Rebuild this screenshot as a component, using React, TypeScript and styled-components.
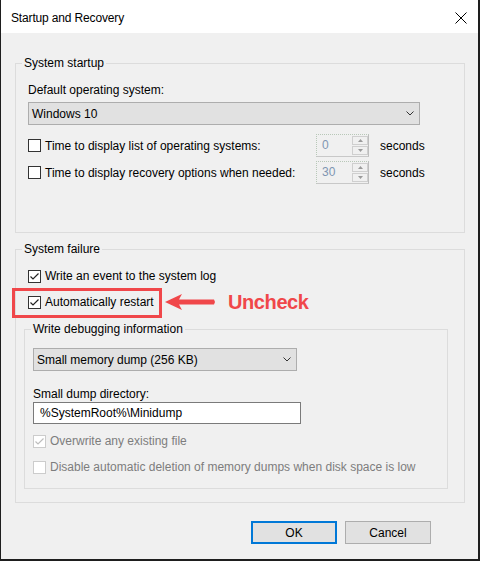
import React from 'react';
import styled, { createGlobalStyle } from 'styled-components';

const Global = createGlobalStyle`
  html, body { margin: 0; padding: 0; background: #f0f0f0; }
  body { font-family: "Liberation Sans", Arial, sans-serif; }
  * { box-sizing: border-box; }
`;

const Window = styled.div`
  width: 480px;
  height: 561px;
  border-left: 1px solid #1e1e1e;
  border-right: 2px solid #1e1e1e;
  border-bottom: 2px solid #1e1e1e;
  background: #f0f0f0;
  display: flex;
  flex-direction: column;
  font-family: "Liberation Sans", Arial, sans-serif;
  font-size: 12px;
  color: #000;
  overflow: hidden;
`;

const TitleBar = styled.div`
  height: 33px;
  flex: none;
  background: #fff;
  display: flex;
  align-items: center;
  justify-content: space-between;
  padding: 2px 11px 0 10px;
`;

const Title = styled.span`
  font-size: 12px;
  line-height: 16px;
  letter-spacing: -0.15px;
`;

const Body = styled.div`
  display: flex;
  flex-direction: column;
  padding: 22px 13px 0 14px;
`;

const Group = styled.fieldset<{ $nested?: boolean; $mt?: number }>`
  margin: ${(p) => (p.$nested ? '11px 0 0 -4px' : `${p.$mt ?? 0}px 0 0 0`)};
  align-self: stretch;
  min-width: 0;
  padding: 0;
  border: 1px solid #dcdcdc;
`;

const Legend = styled.legend`
  margin-left: 6px;
  padding: 0 2px;
  font-size: 12px;
  line-height: 16px;
`;

const GroupBody = styled.div<{ $pad: string }>`
  display: flex;
  flex-direction: column;
  align-items: flex-start;
  padding: ${(p) => p.$pad};
`;

const Label = styled.div<{ $mt?: number }>`
  line-height: 16px;
  margin-top: ${(p) => p.$mt ?? 0}px;
`;

const Select = styled.div<{ $w: number; $mt?: number }>`
  width: ${(p) => p.$w}px;
  height: 23px;
  margin-top: ${(p) => p.$mt ?? 0}px;
  background: #e1e1e1;
  border: 1px solid #adadad;
  display: flex;
  align-items: center;
  justify-content: space-between;
  padding: 0 5px 0 3px;
  line-height: 16px;
`;

const TextBox = styled.div`
  width: 268px;
  height: 22px;
  background: #fff;
  border: 1px solid #7a7a7a;
  display: flex;
  align-items: center;
  padding-left: 6px;
`;

const SpinRow = styled.div<{ $mt: number }>`
  display: grid;
  grid-template-columns: 288px 53px auto;
  align-items: center;
  height: 23px;
  margin-top: ${(p) => p.$mt}px;
`;

const CheckRow = styled.label<{ $mt?: number; $disabled?: boolean }>`
  position: relative;
  display: flex;
  align-items: center;
  gap: 4px;
  height: 16px;
  line-height: 16px;
  margin-top: ${(p) => p.$mt ?? 0}px;
  color: ${(p) => (p.$disabled ? '#7d7d7d' : '#000')};
  white-space: nowrap;
`;

const Box = styled.span<{ $disabled?: boolean }>`
  width: 13px;
  height: 13px;
  flex: none;
  display: flex;
  background: #fff;
  border: 1px solid ${(p) => (p.$disabled ? '#cccccc' : '#333333')};
`;

const Spinner = styled.div`
  height: 23px;
  display: flex;
  border: 1px dotted #b8c8b8;
  border-right: 1px solid #bdbdbd;
  border-bottom: 1px solid #c8c8c8;
`;

const SpinValue = styled.span`
  flex: 1;
  padding-left: 5px;
  line-height: 20px;
  color: #7f96b2;
`;

const SpinButtons = styled.div`
  width: 16px;
  display: flex;
  flex-direction: column;
  gap: 1px;
  padding: 1px 0;
`;

const SpinButton = styled.span`
  flex: 1;
  border: 1px solid #cfcfcf;
  display: flex;
  align-items: center;
  justify-content: center;
`;

const Seconds = styled.span`
  padding-left: 11px;
  line-height: 16px;
`;

const Highlight = styled.span`
  position: absolute;
  left: -16px;
  top: -6px;
  width: 150px;
  height: 30px;
  border: 3px solid #f0474a;
  pointer-events: none;
`;

const Arrow = styled.svg`
  position: absolute;
  left: 137px;
  top: -1px;
`;

const Callout = styled.span`
  position: absolute;
  left: 200px;
  top: -4px;
  font-family: "Liberation Sans", Arial, sans-serif;
  font-weight: bold;
  font-size: 20px;
  line-height: 24px;
  letter-spacing: -0.4px;
  color: #f0474a;
`;

const ButtonRow = styled.div`
  display: flex;
  justify-content: flex-end;
  gap: 8px;
  margin: 18px 34px 0 0;
`;

const Button = styled.button<{ $default?: boolean }>`
  width: 86px;
  height: 23px;
  background: #e1e1e1;
  border: ${(p) => (p.$default ? '2px solid #0078d7' : '1px solid #adadad')};
  font-family: "Liberation Sans", Arial, sans-serif;
  font-size: 12px;
  color: #000;
  padding: 0;
`;

const Check = ({ checked, disabled }: { checked?: boolean; disabled?: boolean }) => (
  <Box $disabled={disabled}>
    {checked && (
      <svg width="11" height="11" viewBox="0 0 11 11">
        <path d="M1.5 5.5 L4 8 L9.5 2.5" fill="none" stroke={disabled ? '#bdbdbd' : '#222'} strokeWidth="1.2" />
      </svg>
    )}
  </Box>
);

const Chevron = () => (
  <svg width="8" height="5" viewBox="0 0 8 5">
    <path d="M0.5 0.5 L4 4 L7.5 0.5" fill="none" stroke="#333" strokeWidth="1" />
  </svg>
);

const Tri = ({ up }: { up?: boolean }) => (
  <svg width="5" height="3" viewBox="0 0 5 3">
    <path d={up ? 'M0 3 L2.5 0 L5 3 Z' : 'M0 0 L2.5 3 L5 0 Z'} fill="#9a9a9a" />
  </svg>
);

const SpinField = ({ value }: { value: string }) => (
  <Spinner>
    <SpinValue>{value}</SpinValue>
    <SpinButtons>
      <SpinButton>
        <Tri up />
      </SpinButton>
      <SpinButton>
        <Tri />
      </SpinButton>
    </SpinButtons>
  </Spinner>
);

export default function App() {
  return (
    <>
      <Global />
      <Window>
        <TitleBar>
          <Title>Startup and Recovery</Title>
          <svg width="12" height="12" viewBox="0 0 12 12">
            <path d="M0.5 0.5 L11.5 11.5 M11.5 0.5 L0.5 11.5" stroke="#000" strokeWidth="1" />
          </svg>
        </TitleBar>
        <Body>
          <Group>
            <Legend>System startup</Legend>
            <GroupBody $pad="11px 16px 48px 12px">
              <Label>Default operating system:</Label>
              <Select $w={392} $mt={4}>
                <span>Windows 10</span>
                <Chevron />
              </Select>
              <SpinRow $mt={9}>
                <CheckRow>
                  <Check />
                  Time to display list of operating systems:
                </CheckRow>
                <SpinField value="0" />
                <Seconds>seconds</Seconds>
              </SpinRow>
              <SpinRow $mt={4}>
                <CheckRow>
                  <Check />
                  Time to display recovery options when needed:
                </CheckRow>
                <SpinField value="30" />
                <Seconds>seconds</Seconds>
              </SpinRow>
            </GroupBody>
          </Group>
          <Group $mt={8}>
            <Legend>System failure</Legend>
            <GroupBody $pad="11px 16px 13px 12px">
              <CheckRow>
                <Check checked />
                Write an event to the system log
              </CheckRow>
              <CheckRow $mt={10}>
                <Check checked />
                Automatically restart
                <Highlight />
                <Arrow width="50" height="18" viewBox="0 0 50 18">
                  <path d="M0 9 L17 1 L14 6.5 L49 6.5 L50 9 L49 11.5 L14 11.5 L17 17 Z" fill="#f0474a" />
                </Arrow>
                <Callout>Uncheck</Callout>
              </CheckRow>
              <Group $nested>
                <Legend>Write debugging information</Legend>
                <GroupBody $pad="11px 8px 13px 8px">
                  <Select $w={264}>
                    <span>Small memory dump (256 KB)</span>
                    <Chevron />
                  </Select>
                  <Label $mt={15}>Small dump directory:</Label>
                  <TextBox>%SystemRoot%\Minidump</TextBox>
                  <CheckRow $mt={9} $disabled>
                    <Check checked disabled />
                    Overwrite any existing file
                  </CheckRow>
                  <CheckRow $mt={10} $disabled>
                    <Check disabled />
                    Disable automatic deletion of memory dumps when disk space is low
                  </CheckRow>
                </GroupBody>
              </Group>
            </GroupBody>
          </Group>
          <ButtonRow>
            <Button $default>OK</Button>
            <Button>Cancel</Button>
          </ButtonRow>
        </Body>
      </Window>
    </>
  );
}
